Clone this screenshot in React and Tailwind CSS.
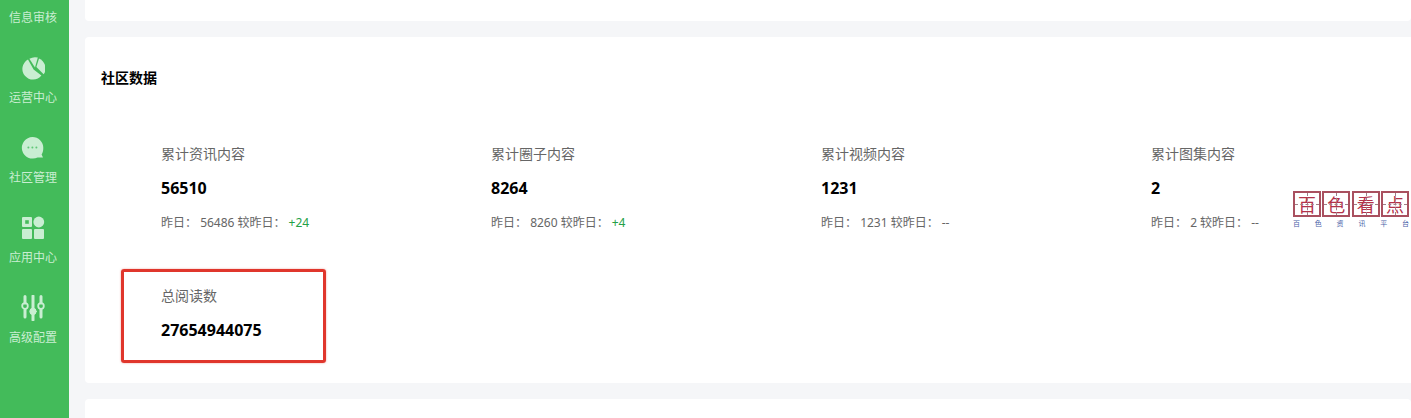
const font = { fontFamily: '"Noto Sans", "Noto Sans CJK SC", sans-serif' };

function PieIcon() {
  return (
    <svg width="24" height="24" viewBox="0 0 24 24" fill="#c9eed2">
      <path d="M7 3.6 L12.6 13.6 L20.4 19.4 A10.6 10.6 0 1 1 7 3.6 Z" />
      <path d="M8.4 2.8 A11 11 0 0 1 16.8 1.6 L14 11.4 Z" />
      <path d="M18 2.4 A11 11 0 0 1 23.5 17 L22.6 18.2 L15.4 11 Z" />
    </svg>
  );
}

function ChatIcon() {
  return (
    <svg width="24" height="24" viewBox="0 0 24 24" fill="none">
      <path d="M11.5 1 A10.8 10.8 0 0 1 22.3 11.8 C22.3 15 21.6 17 20.6 18.6 L22 21.6 L16.6 21.4 A10.8 10.8 0 1 1 11.5 1 Z" fill="#c9eed2" />
      <circle cx="7.4" cy="11.6" r="1" fill="#5fc777" />
      <circle cx="11.4" cy="11.6" r="1" fill="#5fc777" />
      <circle cx="15.4" cy="11.6" r="1" fill="#5fc777" />
    </svg>
  );
}

function AppsIcon() {
  return (
    <svg width="24" height="24" viewBox="0 0 24 24" fill="none">
      <rect x="1" y="1" width="10" height="10" rx="1" fill="#c9eed2" />
      <rect x="4.2" y="4.2" width="3.6" height="3.6" fill="#45bb5b" />
      <circle cx="17.8" cy="6" r="5.4" fill="#c9eed2" />
      <rect x="1" y="13" width="10" height="10" rx="1" fill="#c9eed2" />
      <rect x="13" y="13" width="10" height="10" rx="1" fill="#c9eed2" />
    </svg>
  );
}

function SlidersIcon() {
  return (
    <svg width="24" height="26" viewBox="0 0 24 26" fill="none" stroke="#c9eed2" strokeLinecap="round">
      <path d="M4 1.5 V8 M4 14.5 V22" strokeWidth="3" />
      <circle cx="4" cy="11" r="2.8" strokeWidth="1.8" />
      <path d="M12 1 V14 M12 19 V25" strokeWidth="3" />
      <circle cx="12" cy="16.4" r="3.2" fill="#c9eed2" strokeWidth="1" />
      <path d="M20 1.5 V8 M20 14.5 V22" strokeWidth="3" />
      <circle cx="20" cy="11" r="2.8" strokeWidth="1.8" />
    </svg>
  );
}

function NavItem({ icon, label }) {
  return (
    <div className="h-20 flex flex-col items-center justify-end shrink-0">
      <div className="h-[26px] flex items-center justify-center">{icon}</div>
      <div className="mt-[9px] mb-[11px] text-xs leading-[16px] text-[#c9eed2] whitespace-nowrap">{label}</div>
    </div>
  );
}

function Stat({ label, value, sub, y, diff, green }) {
  return (
    <div className="h-[142px]">
      <div className="text-sm leading-[18px] text-[#666]">{label}</div>
      <div className="mt-[15px] text-base leading-[20px] font-bold text-black">{value}</div>
      {sub && (
        <div className="mt-[17px] text-xs leading-[16px] text-[#666] whitespace-pre">
          昨日： {y} 较昨日：
          <span className={green ? "ml-[3px] text-[#23a047]" : "ml-[3px]"}>{diff}</span>
        </div>
      )}
    </div>
  );
}

function Glyph({ c }) {
  return (
    <div className="relative w-[28px] h-[26px] border-2 border-[#a9505f] flex items-center justify-center text-[18px] leading-none text-[#b3324a]" style={{ fontFamily: '"Noto Sans CJK SC", serif' }}>
      <span className="relative">{c}</span>
      <div className="absolute left-0 right-0 top-1/2 border-t border-dashed border-[#a08088]" />
      <div className="absolute top-0 bottom-0 left-1/2 border-l border-dashed border-[#a08088]" />
    </div>
  );
}

export default function App() {
  return (
    <div className="relative w-[1411px] h-[418px] overflow-hidden flex bg-[#f5f6f8]" style={font}>
      <aside className="w-[69px] shrink-0 bg-[#43bb5a] flex flex-col -mt-[43px] pr-[3px] h-[461px]">
        <NavItem label="信息审核" icon={null} />
        <NavItem label="运营中心" icon={<PieIcon />} />
        <NavItem label="社区管理" icon={<ChatIcon />} />
        <NavItem label="应用中心" icon={<AppsIcon />} />
        <NavItem label="高级配置" icon={<SlidersIcon />} />
      </aside>
      <main className="flex-1 min-w-0 pl-4 flex flex-col gap-4 -mt-[20px]">
        <div className="h-[41px] shrink-0 bg-white rounded" />
        <section className="h-[346px] shrink-0 w-[1400px] bg-white rounded pl-4">
          <h2 className="pt-[32px] text-sm leading-[18px] font-bold text-black">社区数据</h2>
          <div className="mt-[58px] ml-[60px] grid grid-cols-[330px_330px_330px_330px]">
            <Stat label="累计资讯内容" value="56510" sub y="56486" diff="+24" green />
            <Stat label="累计圈子内容" value="8264" sub y="8260" diff="+4" green />
            <Stat label="累计视频内容" value="1231" sub y="1231" diff="--" />
            <Stat label="累计图集内容" value="2" sub y="2" diff="--" />
            <Stat label="总阅读数" value="27654944075" />
          </div>
        </section>
        <div className="h-[60px] shrink-0 bg-white rounded" />
      </main>

      <div className="absolute left-[121px] top-[269px] w-[205px] h-[94px] border-[3px] border-[#e0362c] rounded-[3px] shadow-[0_0_2px_rgba(224,54,44,0.5)]" />

      <div className="absolute left-[1293px] top-[191px] w-[116px]">
        <div className="flex gap-[1px] justify-between">
          <Glyph c="百" />
          <Glyph c="色" />
          <Glyph c="看" />
          <Glyph c="点" />
        </div>
        <div className="flex justify-between px-0 mt-[2px] text-[7px] leading-[10px] text-[#4a62a8]">
          <span>百</span><span>色</span><span>资</span><span>讯</span><span>平</span><span>台</span>
        </div>
      </div>
    </div>
  );
}
